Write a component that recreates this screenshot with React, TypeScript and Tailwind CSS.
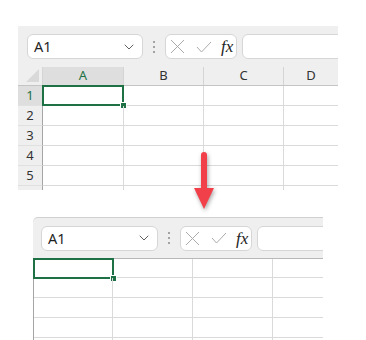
import { ChevronDown } from "lucide-react";

const font = { fontFamily: '"Noto Sans", "Open Sans", sans-serif' };

function NameBox({ width }: { width: string }) {
  return (
    <div
      className={`${width} h-[25px] shrink-0 rounded-md border border-[#d6d6d6] bg-white flex items-center justify-between pl-[6px] pr-[5px]`}
    >
      <span className="text-[14.5px] text-[#1f1f1f] leading-none">A1</span>
      <ChevronDown size={16} strokeWidth={1.4} className="text-[#555]" />
    </div>
  );
}

function Dots() {
  return (
    <div className="w-[22px] shrink-0 flex flex-col items-center gap-[3px]">
      <span className="w-[2px] h-[2px] rounded-full bg-[#8a8a8a]" />
      <span className="w-[2px] h-[2px] rounded-full bg-[#8a8a8a]" />
      <span className="w-[2px] h-[2px] rounded-full bg-[#8a8a8a]" />
    </div>
  );
}

function FormulaButtons() {
  return (
    <div className="w-[72px] h-[25px] shrink-0 rounded-md border border-[#d6d6d6] bg-white flex items-center pl-[4px]">
      <svg width="15" height="15" viewBox="0 0 15 15" className="shrink-0">
        <path d="M1 1L14 14M14 1L1 14" stroke="#ababab" strokeWidth="1" fill="none" />
      </svg>
      <svg width="16" height="12" viewBox="0 0 16 12" className="ml-[11px] shrink-0">
        <path d="M1 6L5.5 11L15 1" stroke="#ababab" strokeWidth="1" fill="none" />
      </svg>
      <span
        className="ml-[9px] text-[17px] italic text-[#222] leading-none"
        style={{ fontFamily: '"Liberation Serif", serif' }}
      >
        fx
      </span>
    </div>
  );
}

function Toolbar() {
  return (
    <>
      <Dots />
      <FormulaButtons />
      <div className="ml-[5px] w-[140px] h-[25px] shrink-0 rounded-md border border-[#d6d6d6] bg-white" />
    </>
  );
}

function Selection({ w }: { w: string }) {
  return (
    <div className={`absolute -left-px -top-px ${w} h-[21px] border-2 border-[#1e7145]`}>
      <div className="absolute -right-[5px] -bottom-[5px] w-[7px] h-[7px] bg-[#1e7145] border border-white" />
    </div>
  );
}

const rows = [1, 2, 3, 4, 5];

export default function App() {
  return (
    <div className="relative w-[366px] h-[340px] bg-white overflow-hidden" style={font}>
      {/* before */}
      <div className="ml-[18px] pt-[26px]">
        <div className="w-[320px] h-[164px] overflow-hidden bg-[#efefef]">
          <div className="h-[41px] flex items-center">
            <div className="ml-[9px]">
              <NameBox width="w-[116px]" />
            </div>
            <Toolbar />
          </div>
          {/* column headers */}
          <div className="flex h-[19px] border-b border-[#c4c4c4] text-[13px] text-[#333]">
            <div className="w-[25px] shrink-0 border-r border-[#d4d4d4] relative">
              <div className="absolute right-[3px] bottom-[3px] w-0 h-0 border-l-[13px] border-l-transparent border-b-[13px] border-b-[#d9d9d9]" />
            </div>
            <div className="w-[81px] shrink-0 bg-[#dedede] border-r border-[#d4d4d4] flex items-center justify-center text-[#1e7145]">A</div>
            <div className="w-[80px] shrink-0 border-r border-[#d4d4d4] flex items-center justify-center">B</div>
            <div className="w-[80px] shrink-0 border-r border-[#d4d4d4] flex items-center justify-center">C</div>
            <div className="flex-1 flex items-center justify-center">D</div>
          </div>
          {[...rows, 6].map((r) => (
            <div key={r} className="flex h-[20px] text-[13px] text-[#333]">
              <div
                className={`w-[25px] shrink-0 border-r border-[#a6a6a6] border-b border-b-[#e0e0e0] flex items-center justify-center ${
                  r === 1 ? "bg-[#dedede] text-[#1e7145]" : ""
                }`}
              >
                {r <= 5 ? r : ""}
              </div>
              <div className="flex-1 flex bg-white">
                <div className="relative w-[81px] shrink-0 border-r border-b border-[#dadada]">
                  {r === 1 && <Selection w="w-[82px]" />}
                </div>
                <div className="w-[80px] shrink-0 border-r border-b border-[#dadada]" />
                <div className="w-[80px] shrink-0 border-r border-b border-[#dadada]" />
                <div className="flex-1 border-b border-[#dadada]" />
              </div>
            </div>
          ))}
        </div>
      </div>

      {/* after */}
      <div className="ml-[33px] mt-[27px] w-[290px] h-[123px] overflow-hidden bg-[#efefef] border-t border-[#d0d0d0] rounded-tl-[5px]">
        <div className="h-[41px] flex items-center border-b border-[#b8b8b8]">
          <div className="ml-[8px]">
            <NameBox width="w-[117px]" />
          </div>
          <Toolbar />
        </div>
        <div className="bg-white border-l border-[#a6a6a6]">
          {rows.map((r) => (
            <div key={r} className={`flex ${r === 1 ? "h-[19px]" : "h-[20px]"}`}>
              <div className="relative w-[79px] shrink-0 border-r border-b border-[#dadada]">
                {r === 1 && <Selection w="w-[81px]" />}
              </div>
              <div className="w-[80px] shrink-0 border-r border-b border-[#dadada]" />
              <div className="w-[80px] shrink-0 border-r border-b border-[#dadada]" />
              <div className="flex-1 border-b border-[#dadada]" />
            </div>
          ))}
        </div>
      </div>

      {/* arrow overlay */}
      <svg
        className="absolute left-[190px] top-[148px]"
        width="30"
        height="66"
        viewBox="0 0 30 66"
        style={{ filter: "drop-shadow(1px 2px 2px rgba(0,0,0,0.35))" }}
      >
        <line x1="14" y1="7" x2="14" y2="42" stroke="#f2404a" strokeWidth="6" strokeLinecap="round" />
        <polygon points="4,40 24,40 14,61" fill="#f2404a" />
      </svg>
    </div>
  );
}
